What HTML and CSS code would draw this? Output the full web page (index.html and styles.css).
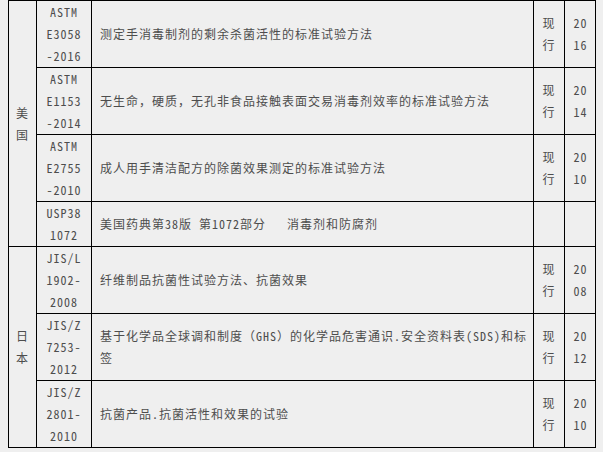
FILE: index.html
```html
<!DOCTYPE html>
<html lang="zh">
<head>
<meta charset="utf-8">
<link rel="stylesheet" href="styles.css">
</head>
<body>
<table class="std">
  <colgroup>
    <col class="c-country">
    <col class="c-code">
    <col class="c-name">
    <col class="c-state">
    <col class="c-year">
  </colgroup>
  <tbody>
    <tr class="cut"><td></td><td></td><td></td><td></td><td></td></tr>
    <tr>
      <td class="country" rowspan="4">美国</td>
      <td class="code">ASTM E3058-2016</td>
      <td class="name">测定手消毒制剂的剩余杀菌活性的标准试验方法</td>
      <td class="state">现行</td>
      <td class="year">2016</td>
    </tr>
    <tr>
      <td class="code">ASTM E1153-2014</td>
      <td class="name">无生命，硬质，无孔非食品接触表面交易消毒剂效率的标准试验方法</td>
      <td class="state">现行</td>
      <td class="year">2014</td>
    </tr>
    <tr>
      <td class="code">ASTM E2755-2010</td>
      <td class="name">成人用手清洁配方的除菌效果测定的标准试验方法</td>
      <td class="state">现行</td>
      <td class="year">2010</td>
    </tr>
    <tr>
      <td class="code">USP381072</td>
      <td class="name">美国药典第38版 第1072部分&nbsp;&nbsp; 消毒剂和防腐剂</td>
      <td class="state"></td>
      <td class="year"></td>
    </tr>
    <tr>
      <td class="country" rowspan="3">日本</td>
      <td class="code">JIS/L1902-2008</td>
      <td class="name">纤维制品抗菌性试验方法、抗菌效果</td>
      <td class="state">现行</td>
      <td class="year">2008</td>
    </tr>
    <tr>
      <td class="code">JIS/Z7253-2012</td>
      <td class="name">基于化学品全球调和制度（GHS）的化学品危害通识.安全资料表(SDS)和标签</td>
      <td class="state">现行</td>
      <td class="year">2012</td>
    </tr>
    <tr>
      <td class="code">JIS/Z2801-2010</td>
      <td class="name">抗菌产品.抗菌活性和效果的试验</td>
      <td class="state">现行</td>
      <td class="year">2010</td>
    </tr>
  </tbody>
</table>
</body>
</html>
```

FILE: styles.css
```css
html, body {
  margin: 0;
  padding: 0;
  background: #efefef;
}

body {
  padding-left: 8px;
  font-family: "Noto Sans Mono CJK SC", "Noto Sans CJK SC", "DejaVu Sans Mono", monospace;
  font-size: 12px;
  letter-spacing: 1px;
  color: #4d4d4d;
}

.std {
  border-collapse: collapse;
  table-layout: fixed;
  width: 588px;
}

.c-country { width: 28px; }
.c-code { width: 55px; }
.c-name { width: 442px; }
.c-state { width: 31px; }
.c-year { width: 31px; }

.std td {
  border: 1px solid #000;
  padding: 0;
  line-height: 22px;
  vertical-align: middle;
  word-break: break-all;
}

.std tr.cut td {
  height: 0;
  line-height: 0;
  padding: 0;
  border-top: none;
}

.std td.country {
  text-align: center;
  padding: 0 7px;
}

.std td.code {
  text-align: center;
  padding: 0 8px;
}

.std td.name {
  padding: 0 6px 0 8px;
}

.std td.state {
  text-align: center;
  padding: 0 8px;
}

.std td.year {
  text-align: center;
  padding: 0 6px 0 7px;
}
```
